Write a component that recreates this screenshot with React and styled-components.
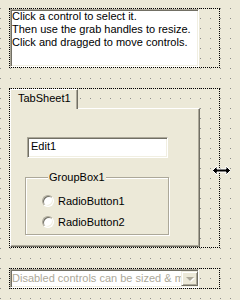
import styled, { createGlobalStyle } from 'styled-components'

const Global = createGlobalStyle`
  html, body {
    margin: 0;
    padding: 0;
  }
  body {
    font-family: "Liberation Sans", Arial, sans-serif;
    font-size: 11px;
    color: #000;
  }
`

const Designer = styled.div`
  position: relative;
  width: 240px;
  height: 300px;
  box-sizing: border-box;
  padding: 8px 0 0 9px;
  display: flex;
  flex-direction: column;
  gap: 20px;
  overflow: hidden;
  background-color: #8c8c8c;
  background-image:
    linear-gradient(to right, transparent 1px, #ece9d8 1px),
    linear-gradient(to bottom, transparent 1px, #ece9d8 1px);
  background-size: 10px 10px;
  background-position: 0 8px;
`

const Selection = styled.div`
  width: 211px;
  height: ${p => p.$h}px;
  box-sizing: border-box;
  border: 1px dotted #000;
  display: flex;
  flex-direction: column;
  align-items: flex-start;
`

const Sunken = styled.div`
  box-sizing: border-box;
  background: #fff;
  border: 1px solid;
  border-color: #aca899 #fff #fff #aca899;
  box-shadow: inset 1px 1px 0 #716f64, inset -1px -1px 0 #f1efe2;
`

const Memo = styled(Sunken)`
  width: 189px;
  height: 100%;
  padding: 0 1px;
  line-height: 13px;
  white-space: nowrap;
  overflow: hidden;
`

const TabStrip = styled.div`
  display: flex;
  height: 19px;
`

const Tab = styled.div`
  position: relative;
  z-index: 1;
  width: 68px;
  height: 20px;
  margin-bottom: -1px;
  box-sizing: border-box;
  background: #ece9d8;
  border-top: 1px solid #fff;
  border-left: 1px solid #fff;
  border-right: 1px solid #716f64;
  box-shadow: inset -1px 0 0 #aca899;
  padding: 2px 0 0 7px;
  line-height: 13px;
  white-space: nowrap;
`

const Page = styled.div`
  width: 190px;
  height: 139px;
  box-sizing: border-box;
  background: #ece9d8;
  border-top: 1px solid #fff;
  border-left: 1px solid #fff;
  border-right: 1px solid #716f64;
  border-bottom: 1px solid #716f64;
  box-shadow: inset -1px -1px 0 #aca899;
  padding: 28px 0 0 14px;
  display: flex;
  flex-direction: column;
  align-items: flex-start;
`

const Edit = styled(Sunken)`
  width: 141px;
  height: 21px;
  margin-left: 2px;
  padding-left: 3px;
  line-height: 17px;
`

const GroupBox = styled.fieldset`
  width: 144px;
  height: 64px;
  margin: 13px 0 0 0;
  padding: 6px 0 0 16px;
  box-sizing: border-box;
  border: 1px solid #aca899;
  box-shadow: inset 1px 1px 0 #fff, 1px 1px 0 #fff;
  display: flex;
  flex-direction: column;
`

const Caption = styled.legend`
  margin-left: 6px;
  padding: 0 1px;
  line-height: 13px;
  background: #ece9d8;
`

const RadioRow = styled.label`
  display: flex;
  align-items: center;
  gap: 4px;
  height: 21px;
`

const RadioDot = styled.span`
  width: 12px;
  height: 12px;
  box-sizing: border-box;
  border-radius: 50%;
  background: #fff;
  border: 1px solid;
  border-color: #aca899 #fff #fff #aca899;
  box-shadow: inset 1px 1px 0 #716f64, inset -1px -1px 0 #f1efe2;
`

const Combo = styled(Sunken)`
  width: 189px;
  height: 19px;
  display: flex;
  align-items: center;
  padding: 2px 0 2px 1px;
  color: #aca899;
`

const ComboText = styled.span`
  flex: 1;
  white-space: nowrap;
  overflow: hidden;
  line-height: 15px;
`

const DropButton = styled.span`
  width: 17px;
  height: 15px;
  flex: none;
  box-sizing: border-box;
  background: #ece9d8;
  border: 1px solid;
  border-color: #f1efe2 #716f64 #716f64 #f1efe2;
  box-shadow: inset 1px 1px 0 #fff, inset -1px -1px 0 #aca899;
  display: flex;
  align-items: center;
  justify-content: center;

  &::after {
    content: "";
    border-style: solid;
    border-width: 4px 4px 0 4px;
    border-color: #aca899 transparent transparent transparent;
    filter: drop-shadow(1px 1px 0 #fff);
  }
`

const Cursor = styled.svg`
  position: absolute;
  left: 211px;
  top: 165px;
`

function Radio({ label }) {
  return (
    <RadioRow>
      <RadioDot />
      {label}
    </RadioRow>
  )
}

export default function App() {
  return (
    <>
      <Global />
      <Designer>
        <Selection $h={60}>
          <Memo>
            Click a control to select it.<br />
            Then use the grab handles to resize.<br />
            Click and dragged to move controls.
          </Memo>
        </Selection>

        <Selection $h={160}>
          <TabStrip>
            <Tab>TabSheet1</Tab>
          </TabStrip>
          <Page>
            <Edit>Edit1</Edit>
            <GroupBox>
              <Caption>GroupBox1</Caption>
              <Radio label="RadioButton1" />
              <Radio label="RadioButton2" />
            </GroupBox>
          </Page>
        </Selection>

        <Selection $h={21}>
          <Combo>
            <ComboText>Disabled controls can be sized &amp; moved</ComboText>
            <DropButton />
          </Combo>
        </Selection>

        <Cursor width="21" height="11" viewBox="0 0 21 11">
          <path
            d="M1.5 5.5 L6 1 L6 4 L15 4 L15 1 L19.5 5.5 L15 10 L15 7 L6 7 L6 10 Z"
            fill="#000"
            stroke="#fff"
            strokeWidth="1"
          />
        </Cursor>
      </Designer>
    </>
  )
}
